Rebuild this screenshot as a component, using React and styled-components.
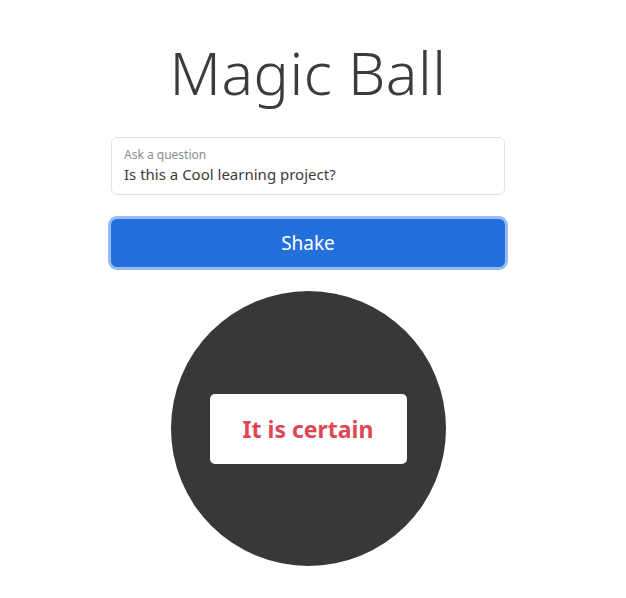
import React from "react";
import styled, { createGlobalStyle } from "styled-components";

const GlobalStyle = createGlobalStyle`
  body {
    margin: 0;
    background: #fff;
    font-family: "Noto Sans", "Open Sans", sans-serif;
    color: #212529;
  }
`;

const Page = styled.div`
  width: 616px;
  display: flex;
  flex-direction: column;
  align-items: center;
  padding-top: 32px;
`;

const Title = styled.h1`
  margin: 0;
  font-family: "Noto Sans", sans-serif;
  font-weight: 300;
  font-size: 59px;
  line-height: 80px;
  letter-spacing: 0.5px;
  color: #3a3b3d;
`;

const Form = styled.div`
  width: 394px;
  margin-top: 25px;
  display: flex;
  flex-direction: column;
  gap: 24px;
`;

const Field = styled.div`
  box-sizing: border-box;
  height: 58px;
  border: 1px solid #dee2e6;
  border-radius: 6px;
  padding: 9px 12px 0;
  display: flex;
  flex-direction: column;
`;

const Label = styled.label`
  font-size: 12px;
  line-height: 16px;
  color: #868e96;
`;

const Input = styled.input`
  border: none;
  outline: none;
  padding: 0;
  margin-top: 1px;
  font-family: inherit;
  font-size: 15px;
  line-height: 20px;
  color: #3a3b3d;
  background: transparent;
`;

const ShakeButton = styled.button`
  height: 48px;
  border: none;
  border-radius: 6px;
  background: #236fdc;
  color: #fff;
  font-family: inherit;
  font-size: 19px;
  box-shadow: 0 0 0 3px #95bdf7;
  cursor: pointer;
`;

const Ball = styled.div`
  margin-top: 24px;
  width: 275px;
  height: 275px;
  border-radius: 50%;
  background: #383838;
  display: flex;
  align-items: center;
  justify-content: center;
`;

const Answer = styled.div`
  width: 197px;
  height: 70px;
  border-radius: 5px;
  background: #fff;
  display: flex;
  align-items: center;
  justify-content: center;
  color: #e04555;
  font-weight: 700;
  font-size: 23px;
`;

export default function App() {
  return (
    <>
      <GlobalStyle />
      <Page>
        <Title>Magic Ball</Title>
        <Form>
          <Field>
            <Label>Ask a question</Label>
            <Input defaultValue="Is this a Cool learning project?" />
          </Field>
          <ShakeButton>Shake</ShakeButton>
        </Form>
        <Ball>
          <Answer>It is certain</Answer>
        </Ball>
      </Page>
    </>
  );
}
